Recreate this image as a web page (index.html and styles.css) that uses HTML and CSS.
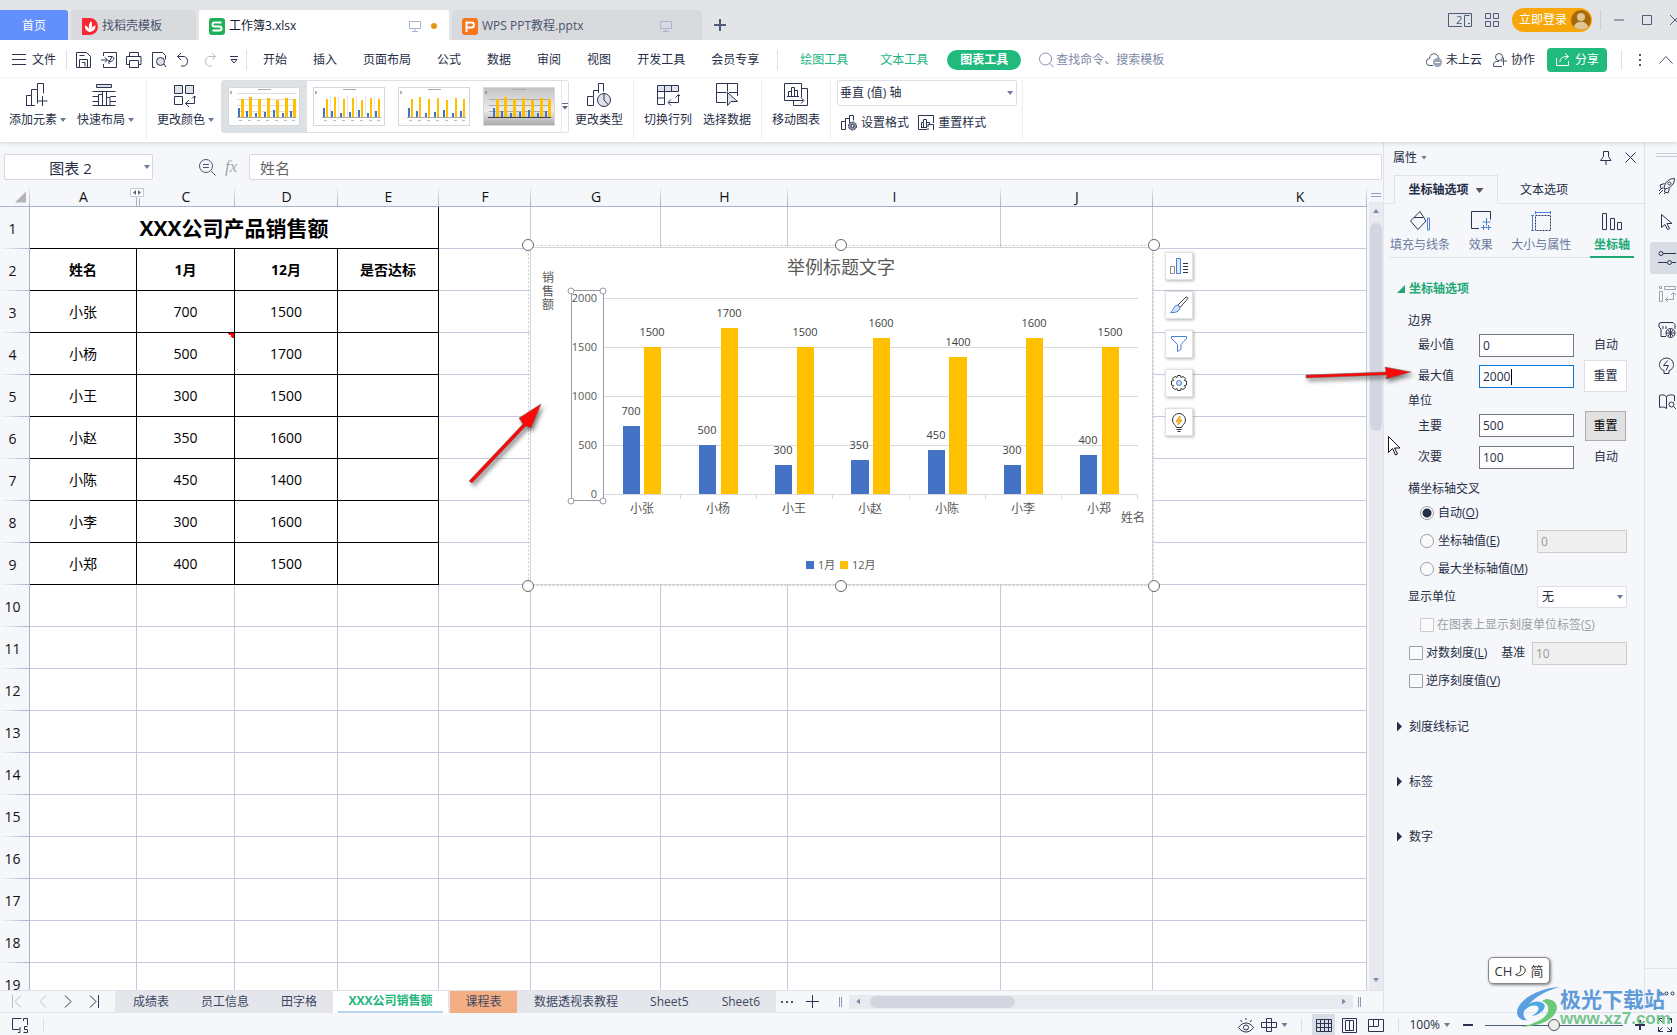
FILE: index.html
```html
<!DOCTYPE html>
<html lang="zh-CN">
<head>
<meta charset="utf-8">
<title>工作簿3.xlsx</title>
<link rel="stylesheet" href="styles.css">
</head>
<body>
<svg class="defs" width="0" height="0" aria-hidden="true">
  <defs>
    <symbol id="bars" viewBox="0 0 70 37">
      <path d="M29 1.500h13" stroke="#aaa"/>
      <path d="M2 3v3" stroke="#666"/>
      <path d="M9 20h2v9h-2zM17 23h2v6h-2zM26 25h2v4h-2zM35 24h2v5h-2zM44 22h2v7h-2zM53 25h2v4h-2zM61 23h2v6h-2z" fill="#4472c4"/>
      <path d="M12 11h2v18h-2zM20 9h2v20h-2zM29 11h2v18h-2zM38 10h2v19h-2zM47 12h2v17h-2zM56 10h2v19h-2zM64 11h2v18h-2z" fill="#ffc000"/>
      <path d="M8 29.500h59" stroke="#aaa"/>
      <path d="M10 32.500h3M19 32.500h3M28 32.500h3M37 32.500h3M46 32.500h3M55 32.500h3M63 32.500h3" stroke="#bbb"/>
    </symbol>
    <symbol id="monitor" viewBox="0 0 12 12"><path d="M.5 1.500h11v7H.5zM6 8.500v3M3 11.500h6" fill="none" stroke="#a9b4d2"/></symbol>
  </defs>
</svg>

<header class="titlebar">
  <nav class="doctabs">
    <button class="doctab home">首页</button>
    <button class="doctab docer"><svg width="16" height="17" viewBox="0 0 16 17"><path d="M0 0h8a8 8.500 0 0 1 0 17H0z" fill="#fb2635"/><path d="M7.500 14C4 13 2.500 10.500 3 7.500 5 8 6.500 9.500 7 11 6.500 8 7 5.500 9 3c1.500 3 1.500 5 0 8 1-2 2.500-3 4.500-3.500 0 3.500-2 6-6 6.500z" fill="#fff"/></svg>找稻壳模板</button>
    <button class="doctab active"><svg width="16" height="17" viewBox="0 0 16 17"><rect width="16" height="17" rx="3" fill="#1faf58"/><path d="M12.500 4.500h-7a2 2 0 0 0 0 4h5a2 2 0 0 1 0 4h-7" fill="none" stroke="#fff" stroke-width="2"/></svg><span class="name">工作簿3.xlsx</span><svg width="12" height="12"><use href="#monitor"/></svg><i class="dirty"></i></button>
    <button class="doctab ppt"><svg width="16" height="17" viewBox="0 0 16 17"><rect width="16" height="17" rx="3" fill="#f6761b"/><path d="M4.500 14V4.500h5a2.500 2.500 0 0 1 0 5H5" fill="none" stroke="#fff" stroke-width="2"/></svg><span class="name">WPS PPT教程.pptx</span><svg width="12" height="12"><use href="#monitor"/></svg></button>
    <button class="newtab" aria-label="新建"><svg width="12" height="12"><path d="M6 0v12M0 6h12" stroke="#4d5b7c" stroke-width="2"/></svg></button>
  </nav>
  <div class="wintools">
    <svg width="24" height="15" fill="none" stroke="#4d5b7c"><path d="M14 13.500H.5v-13h23v13H16.500v-11h5M20 10.500h2"/><text x="8" y="11" class="two">2</text></svg>
    <svg width="14" height="15" fill="none" stroke="#4d5b7c"><path d="M.5.5h5v5h-5zM8.500.5h5v5h-5zM.5 8.500h5v5h-5zM8.500 8.500h5v5h-5z"/></svg>
    <button class="login">立即登录<svg width="20" height="20" viewBox="0 0 20 20"><circle cx="10" cy="10" r="10" fill="#a5690c"/><circle cx="10" cy="7" r="4" fill="#e0c594"/><path d="M3 17c1-7 13-7 14 0a10 10 0 0 1-14 0z" fill="#e0c594"/></svg></button>
    <i class="vline"></i>
    <svg width="10" height="12"><path d="M0 6h10" stroke="#4d5b7c"/></svg>
    <svg width="10" height="12" fill="none" stroke="#4d5b7c"><path d="M.5 1.500h9v9h-9z"/></svg>
    <svg width="10" height="12" stroke="#4d5b7c"><path d="M0 1l10 10M10 1L0 11"/></svg>
  </div>
</header>

<div class="menubar">
  <button class="file"><svg width="14" height="11"><path d="M0 .5h14M0 5.500h14M0 10.500h14" stroke="#2b3350"/></svg>文件</button>
  <i class="vline"></i>
  <div class="quick">
    <svg width="16" height="16"><path d="M.5.5h10l4 4v11H.5zM3.500 15V7.500h8V15M3.500 3.500h5M6 10.500h3v4"/></svg>
    <svg width="16" height="16"><path d="M2.500 4V.5h13v15h-13V12M0 8h6M4 5.500L6.500 8 4 10.500M7 4.500h4c4 1 1 6-3 5M8 12V8M11 5l-3 5"/></svg>
    <svg width="16" height="16"><path d="M3.500 4V.5h9V4M3 12.500H.5v-8h14.500v8h-2M3.500 8.500h9v7h-9z"/></svg>
    <svg width="16" height="16"><path d="M4 15.500H1.500V.5h10l3 3v4M13 12l2 3"/><circle cx="9.500" cy="9.500" r="4" fill="#dde0e6"/></svg>
    <svg width="16" height="16"><path d="M5 1L1.500 4.500 5 8M1.500 4.500h7a4.500 5 0 0 1 0 9.500H5"/></svg>
    <svg width="16" height="16" class="off"><path d="M11 1l3.500 3.500L11 8M14.500 4.500h-7a4.500 5 0 0 0 0 9.500H11"/></svg>
    <svg class="fold" width="8" height="8" viewBox="0 0 8 8"><path d="M0 .5h8M1 3.500h6L4 7z"/></svg>
  </div>
  <i class="vline"></i>
  <nav class="menus">
    <a href="#">开始</a><a href="#">插入</a><a href="#">页面布局</a><a href="#">公式</a><a href="#">数据</a><a href="#">审阅</a><a href="#">视图</a><a href="#">开发工具</a><a href="#">会员专享</a>
  </nav>
  <i class="vline"></i>
  <nav class="ctxmenus"><a href="#">绘图工具</a><a href="#">文本工具</a><a href="#" class="on">图表工具</a></nav>
  <label class="search"><svg width="15" height="16" fill="none" stroke="#8590ab"><circle cx="6.500" cy="7" r="6"/><path d="M11 11.500l3.500 3.500"/></svg><input type="text" placeholder="查找命令、搜索模板"></label>
  <div class="menuright">
    <button class="cloud"><svg width="16" height="14" fill="none" stroke="#4d5670"><path d="M7 12.500H4a3.500 3.500 0 0 1-.5-7 4.500 4.500 0 0 1 9-.5 3 3 0 0 1 1.500 2"/><circle cx="11.500" cy="9.500" r="4.500" fill="#9aa3b8" stroke="none"/><path d="M9 9.500h5" stroke="#fff"/></svg>未上云</button>
    <button class="coop"><svg width="14" height="14" fill="none" stroke="#4d5670"><circle cx="6" cy="4" r="3.500"/><path d="M9 13.500H.5V11a3 3 0 0 1 3-2.500H6M10.500 4.500v8M8 8h6"/></svg>协作</button>
    <button class="share"><svg width="14" height="13" fill="none" stroke="#fff"><path d="M.5 5v7.500h12V8M4 9c0-4 3-5.500 8-5.500M9 .5l3.500 3L9 6.500"/></svg>分享</button>
    <i class="vline"></i>
    <svg width="3" height="12" fill="#4d5670"><path d="M0 0h2v2H0zM0 5h2v2H0zM0 10h2v2H0z"/></svg>
    <svg width="14" height="8" fill="none" stroke="#4d5670"><path d="M.5 7.500L7 .5l6.500 7"/></svg>
  </div>
</div>

<section class="ribbon">
  <button class="big"><svg width="24" height="24"><path d="M2.500 22.500v-10h5v10M2 22.500h9M7.500 12.500v-6h6v14M13.500 6V.5h6v10M18.500 13v10M13.500 18h10"/></svg><span>添加元素<i class="caret"></i></span></button>
  <button class="big"><svg width="24" height="24"><path d="M4.500 1.500h15v3h-15z" fill="#dfe2e8"/><path d="M.5 8.500h23M.5 13.500h6M.5 18.500h6M.5 22.500h23M18 13.500h6M18 18.500h6M6.500 22V11.500h4V22M10.500 14V8.500h4V22M14.500 14.500h3.500V22"/></svg><span>快速布局<i class="caret"></i></span></button>
  <i class="sep"></i>
  <button class="big"><svg width="24" height="24"><path d="M2.500 2.500h8v8h-8zM13.500 2.500h8v8h-8z" fill="#dfe2e8"/><path d="M2.500 13.500h8v8h-8zM22.500 13v7.500h-9M17 17l-3.500 3.500L17 24M20 15.500l2.500-2.500 2.500 2.500"/></svg><span>更改颜色<i class="caret"></i></span></button>
  <div class="gallery">
    <button class="sel" aria-label="样式 1"><svg width="72" height="39" viewBox="0 0 70 37"><path d="M8 5.500h60M8 11.500h60M8 17.500h60M8 23.500h60" stroke="#ddd"/><use href="#bars" width="70" height="37"/><path d="M12 11h3v18h-3zM20 9h3v20h-3zM29 11h3v18h-3zM38 10h3v19h-3zM47 12h3v17h-3zM56 10h3v19h-3zM64 11h3v18h-3z" fill="#ffc000"/></svg></button>
    <button aria-label="样式 2"><svg width="72" height="39" viewBox="0 0 70 37"><path d="M16.500 8v21M24.500 8v21M33.500 8v21M42.500 8v21M51.500 8v21M60.500 8v21" stroke="#e4e4e4"/><use href="#bars" width="70" height="37"/></svg></button>
    <button aria-label="样式 3"><svg width="72" height="39" viewBox="0 0 70 37"><use href="#bars" width="70" height="37"/></svg></button>
    <button class="gray" aria-label="样式 4"><svg width="72" height="39" viewBox="0 0 70 37"><path d="M5 11.500h60M5 17.500h60M5 23.500h60" stroke="#aaa"/><use href="#bars" width="70" height="37"/><path d="M12 11h3v18h-3zM20 9h3v20h-3zM29 11h3v18h-3zM38 10h3v19h-3zM47 12h3v17h-3zM56 10h3v19h-3zM64 11h3v18h-3z" fill="#ffc000"/><path d="M4 29.500h63" stroke="#444"/></svg></button>
    <button class="more" aria-label="更多样式"><svg width="6" height="7" viewBox="0 0 6 7"><path d="M0 .5h6" stroke="#5b6784"/><path d="M0 3h6L3 6.500z" fill="#5b6784" stroke="none"/></svg></button>
  </div>
  <button class="big"><svg width="24" height="24"><path d="M.5 22.500v-9h6v9zM6.500 13V7.500h5M11.500 10V.5h5v8"/><circle cx="17" cy="17" r="6.500" fill="#dfe2e8"/><path d="M17 10.500V17l4.500 5"/></svg><span>更改类型</span></button>
  <i class="sep"></i>
  <button class="big"><svg width="24" height="24"><path d="M1.500 2.500h21v6h-21z" fill="#dfe2e8"/><path d="M1.500 2.500v19h7v-19M15.500 2.500v6M1.500 15h7M22.500 12v7.500h-10M15 16.500l-3 3 3 3M19.500 14.500l3-3 3 3"/></svg><span>切换行列</span></button>
  <button class="big"><svg width="24" height="24"><path d="M11 19.500H1.500v-19h21V13M1.500 9.500h10M12.500.5v8M22 9.500h-8"/><path d="M12.500 9.500v13l3.500-4h6.500z" fill="#dfe2e8"/></svg><span>选择数据</span></button>
  <i class="sep"></i>
  <button class="big"><svg width="24" height="24"><path d="M11 17.500H.5V.5h17v14M17.500 5.500h6v17h-14v-5M11 17.500h8M17 14.500l3 3-3 3M4.500 13V8.500h3V13M7.500 9V4.500h3V13M10.500 7.500h3V13M3 13.500h12"/></svg><span>移动图表</span></button>
  <i class="sep"></i>
  <div class="axis">
    <span class="pick"><select aria-label="图表元素"><option>垂直 (值) 轴</option></select></span>
    <div class="pair">
      <button class="small"><svg width="16" height="16"><path d="M.5 14.500V6.500h4v8zM4.500 6V3.500h4M8.500 8V.5h4v5"/><circle cx="11.500" cy="11" r="4" fill="#8d95a8" stroke-dasharray="2 1"/><circle cx="11.500" cy="11" r="1.500" fill="#fff"/></svg>设置格式</button>
      <button class="small"><svg width="16" height="16"><path d="M9 14.500H.5V.5h15V8M3.500 12V7.500h2V12M5.500 7V4.500h3V12M8.500 7.500h3V9M3 12.500h6M10 12V9.500h5.500v5.500M10 15v-2"/></svg>重置样式</button>
    </div>
  </div>
  <i class="sep"></i>
</section>

<main class="workspace">
  <section class="main">
    <div class="formula">
      <span class="namebox"><input type="text" value="图表 2" aria-label="名称框"><i class="caret"></i></span>
      <svg width="17" height="17" fill="none" stroke="#4d5670"><circle cx="7" cy="7" r="6.500"/><path d="M12 12l4.500 4.500M4 5.500h6M4 8.500h6"/></svg>
      <span class="fx">fx</span>
      <input class="fbar" type="text" value="姓名" aria-label="编辑栏">
    </div>
    <div class="sheet">
      <div class="gridwrap">
        <table class="grid">
          <colgroup><col class="cn"><col class="ca"><col class="cc"><col class="cd"><col class="ce"><col class="cf"><col class="cg"><col class="ch"><col class="ci"><col class="cj"><col></colgroup>
          <thead><tr><th class="corner"><i></i></th><th>A</th><th>C</th><th>D</th><th>E</th><th>F</th><th>G</th><th>H</th><th>I</th><th>J</th><th class="last">K</th></tr></thead>
          <tbody>
            <tr><th>1</th><td colspan="4" class="d title">XXX公司产品销售额</td><td><td><td><td><td><td></tr>
            <tr class="hd"><th>2</th><td class="d">姓名<td class="d">1月<td class="d">12月<td class="d">是否达标<td><td><td><td><td><td></tr>
            <tr><th>3</th><td class="d">小张<td class="d">700<td class="d">1500<td class="d"><td><td><td><td><td><td></tr>
            <tr><th>4</th><td class="d">小杨<td class="d note">500<td class="d">1700<td class="d"><td><td><td><td><td><td></tr>
            <tr><th>5</th><td class="d">小王<td class="d">300<td class="d">1500<td class="d"><td><td><td><td><td><td></tr>
            <tr><th>6</th><td class="d">小赵<td class="d">350<td class="d">1600<td class="d"><td><td><td><td><td><td></tr>
            <tr><th>7</th><td class="d">小陈<td class="d">450<td class="d">1400<td class="d"><td><td><td><td><td><td></tr>
            <tr><th>8</th><td class="d">小李<td class="d">300<td class="d">1600<td class="d"><td><td><td><td><td><td></tr>
            <tr><th>9</th><td class="d">小郑<td class="d">400<td class="d">1500<td class="d"><td><td><td><td><td><td></tr>
            <tr><th>10</th><td><td><td><td><td><td><td><td><td><td></tr>
            <tr><th>11</th><td><td><td><td><td><td><td><td><td><td></tr>
            <tr><th>12</th><td><td><td><td><td><td><td><td><td><td></tr>
            <tr><th>13</th><td><td><td><td><td><td><td><td><td><td></tr>
            <tr><th>14</th><td><td><td><td><td><td><td><td><td><td></tr>
            <tr><th>15</th><td><td><td><td><td><td><td><td><td><td></tr>
            <tr><th>16</th><td><td><td><td><td><td><td><td><td><td></tr>
            <tr><th>17</th><td><td><td><td><td><td><td><td><td><td></tr>
            <tr><th>18</th><td><td><td><td><td><td><td><td><td><td></tr>
            <tr><th>19</th><td><td><td><td><td><td><td><td><td><td></tr>
          </tbody>
        </table>
        <svg class="hiddencol" width="15" height="21"><path d="M.5.5h13v8H.5z" fill="#fff" stroke="#c3c8d6"/><path d="M6 2L3 4.500 6 7zM8 2l3 2.500L8 7z" fill="#5b6784"/><path d="M6.500 10v11M9.500 10v11" stroke="#a9b2cc"/></svg>

        <svg class="chart" width="644" height="360" viewBox="520 236 644 360">
          <rect x="530.500" y="247.500" width="622" height="337" fill="#fff" stroke="#d5d5d5"/>
          <rect x="528.500" y="245.500" width="625" height="340" fill="none" stroke="#c8c8c8" stroke-dasharray="2 2"/>
          <path d="M604 298.500h534M604 347.500h534M604 396.500h534M604 445.500h534M604 494.500h534M680.500 494v5M756.500 494v5M832.500 494v5M909.500 494v5M985.500 494v5M1061.500 494v5M1137.500 494v5" stroke="#d9d9d9"/>
          <path d="M623 426h17v68h-17zM699 445h17v49h-17zM775 465h17v29h-17zM851 460h18v34h-18zM928 450h17v44h-17zM1004 465h17v29h-17zM1080 455h17v39h-17z" fill="#4472c4"/>
          <path d="M644 347h17v147h-17zM721 328h17v166h-17zM797 347h17v147h-17zM873 338h17v156h-17zM949 357h18v137h-18zM1026 338h17v156h-17zM1102 347h17v147h-17z" fill="#ffc000"/>
          <text x="841" y="274" class="ctitle">举例标题文字</text>
          <g class="cside"><text x="548" y="282">销</text><text x="548" y="296">售</text><text x="548" y="309">额</text></g>
          <g class="cval axisval"><text x="597" y="302">2000</text><text x="597" y="351">1500</text><text x="597" y="400">1000</text><text x="597" y="449">500</text><text x="597" y="498">0</text></g>
          <g class="cval"><text x="631" y="415">700</text><text x="707" y="434">500</text><text x="783" y="454">300</text><text x="859" y="449">350</text><text x="936" y="439">450</text><text x="1012" y="454">300</text><text x="1088" y="444">400</text>
          <text x="652" y="336">1500</text><text x="729" y="317">1700</text><text x="805" y="336">1500</text><text x="881" y="327">1600</text><text x="958" y="346">1400</text><text x="1034" y="327">1600</text><text x="1110" y="336">1500</text></g>
          <g class="ccat"><text x="642" y="513">小张</text><text x="718" y="513">小杨</text><text x="794" y="513">小王</text><text x="870" y="513">小赵</text><text x="947" y="513">小陈</text><text x="1023" y="513">小李</text><text x="1099" y="513">小郑</text><text x="1133" y="522">姓名</text></g>
          <path d="M806 561h8v8h-8z" fill="#4472c4"/><path d="M840 561h8v8h-8z" fill="#ffc000"/>
          <g class="cleg"><text x="818" y="569">1月</text><text x="852" y="569">12月</text></g>
          <g fill="#fff" stroke="#9a9aa2"><path d="M571.500 290.500h32v210h-32z" fill="none"/><circle cx="571" cy="291" r="3"/><circle cx="603" cy="291" r="3"/><circle cx="571" cy="501" r="3"/><circle cx="603" cy="501" r="3"/></g>
          <g fill="#fff" stroke="#666"><circle cx="528" cy="245" r="5.500"/><circle cx="841" cy="245" r="5.500"/><circle cx="1154" cy="245" r="5.500"/><circle cx="528" cy="586" r="5.500"/><circle cx="841" cy="586" r="5.500"/><circle cx="1154" cy="586" r="5.500"/></g>
        </svg>

        <div class="charttools">
          <button aria-label="图表元素"><svg width="20" height="18"><path d="M1.500 16.500v-7h4v7z" stroke="#8b8b8b"/><path d="M7.500 16.500V1.500h4v15z" fill="#dce9fb" stroke="#4a7fd6"/><path d="M14 6.500h5M14 9.500h5M14 12.500h5M14 15.500h5" stroke="#333"/></svg></button>
          <button aria-label="图表样式"><svg width="20" height="18"><path d="M9 9l8-8c2 0 2 1 1.500 2L11 11.500z" stroke="#444"/><path d="M8.500 9C4 10 5 14 1.500 16.500c5 .5 9-1 9.500-5z" fill="#cfe0f8" stroke="#4a7fd6"/></svg></button>
          <button aria-label="图表筛选器"><svg width="20" height="18"><path d="M2.500 1.500h15v2L12 9.500v5l-3.500 2v-7L2.500 3.500z" stroke="#4a7fd6"/></svg></button>
          <button aria-label="设置"><svg width="20" height="18"><path d="M8.500 1.500h3l.5 2 2-1 2.500 2-1 2 2 .5v4l-2 .5 1 2-2.500 2-2-1-.5 2h-3l-.5-2-2 1-2.500-2 1-2-2-.5V7l2-.5-1-2 2.500-2 2 1z" stroke="#333"/><circle cx="10" cy="9" r="2.500" fill="#cfe0f8" stroke="#4a7fd6"/></svg></button>
          <button aria-label="智能推荐"><svg width="20" height="19"><path d="M7.500 14.500C7 12 3.500 11 3.500 7a6.500 6.500 0 0 1 13 0c0 4-3.500 5-4 7.500zM7.500 16.500h5M8.500 18.500h3" stroke="#333"/><path d="M11 3L7 8.500h2.500L9 12l4-5h-2.500z" fill="#ffc629" stroke="#e99a12"/></svg></button>
        </div>

        <svg class="arrow one" width="90" height="94" viewBox="460 396 90 94"><path d="M469 481L523 424 519 418 541 404 531 428 526 426 472 483z" fill="#fb0808" stroke="#666" stroke-width=".5"/></svg>
      </div>
      <div class="vscroll"><i class="grip"></i><i class="up"></i><i class="vthumb"></i><i class="down"></i></div>
    </div>
    <div class="sheettabs">
      <div class="sheetnav">
        <svg width="10" height="13" class="off"><path d="M.5 0v13M9 .5l-6 6 6 6"/></svg>
        <svg width="8" height="13" class="off"><path d="M7 .5l-6 6 6 6"/></svg>
        <svg width="8" height="13"><path d="M1 .5l6 6-6 6"/></svg>
        <svg width="10" height="13"><path d="M9.500 0v13M1 .5l6 6-6 6"/></svg>
      </div>
      <nav class="tabs"><button>成绩表</button><button>员工信息</button><button>田字格</button><button class="cur">XXX公司销售额</button><button class="orange">课程表</button><button>数据透视表教程</button><button>Sheet5</button><button>Sheet6</button></nav>
      <svg class="dots" width="12" height="2"><path d="M0 0h2v2H0zM5 0h2v2H5zM10 0h2v2h-2z" fill="#4d5670"/></svg>
      <svg width="14" height="14"><path d="M6.500 0v13M0 6.500h13" stroke="#2b3350"/></svg>
      <i class="pipes first"></i>
      <div class="hscroll"><i class="left"></i><i class="hthumb"></i><i class="right"></i></div>
      <i class="pipes"></i>
    </div>
  </section>

  <aside class="panel">
    <div class="phead"><span>属性<i class="caret"></i></span>
      <svg width="14" height="14"><path d="M4.500.5h5v5l2.500 4H1.500l3-4zM7 9.500V14"/></svg>
      <svg width="11" height="11"><path d="M.5.5l10 10M10.500.5l-10 10"/></svg></div>
    <div class="ptabs"><button class="on">坐标轴选项<i class="caret dark"></i></button><button>文本选项</button></div>
    <div class="pkinds">
      <button><svg width="20" height="20"><path d="M10 .5L.5 10 8 18.500l8-8.500zM4 6.500h9"/><path d="M17.500 7v12M19.500 7v12M17.500 19h2M17.500 7h2" class="bl"/></svg>填充与线条</button>
      <button><svg width="20" height="20"><path d="M8 17.500H.5v-17h19v8"/><path d="M15.500 7v8M11.500 11h8M12.500 14v5M10 16.500h5M17.500 14v5M15 16.500h5" class="bl"/></svg>效果</button>
      <button><svg width="20" height="20"><path d="M4.500 4.500h15v15h-15z" stroke-dasharray="2 1"/><path d="M4 1.500h16M4.500 0v3M19.500 0v3M1.500 4v16M0 4.500h3M0 19.500h3" class="bl"/></svg>大小与属性</button>
      <button class="on"><svg width="20" height="18"><path d="M.5.5h4v16h-4zM8.500 5.500h4v11h-4zM15.500 9.500h4v7h-4z"/></svg>坐标轴</button>
    </div>
    <form class="opts">
      <h3 class="sect open"><i></i>坐标轴选项</h3>
      <div class="row">边界</div>
      <div class="row in"><label for="min">最小值</label><input id="min" class="num" value="0"><button type="button" class="plain">自动</button></div>
      <div class="row in tall"><label for="max">最大值</label><span class="focused"><input id="max" class="num" value="2000"><i class="beam"></i></span><button type="button" class="reset">重置</button></div>
      <div class="row low">单位</div>
      <div class="row in major"><label for="maj">主要</label><input id="maj" class="num" value="500"><button type="button" class="reset pressed">重置</button></div>
      <div class="row in minor"><label for="minr">次要</label><input id="minr" class="num" value="100"><button type="button" class="plain">自动</button></div>
      <div class="row cross">横坐标轴交叉</div>
      <div class="row opt ind"><label><input type="radio" name="cross" checked>自动(<u>O</u>)</label></div>
      <div class="row opt ind"><label><input type="radio" name="cross">坐标轴值(<u>E</u>)</label><input class="num dis" value="0" disabled aria-label="坐标轴值"></div>
      <div class="row opt ind"><label><input type="radio" name="cross">最大坐标轴值(<u>M</u>)</label></div>
      <div class="row opt"><label for="unit">显示单位</label><span class="pick unit"><select id="unit"><option>无</option></select></span></div>
      <div class="row opt ind"><label class="gray"><input type="checkbox" disabled>在图表上显示刻度单位标签(<u>S</u>)</label></div>
      <div class="row opt tick"><label><input type="checkbox">对数刻度(<u>L</u>)</label><label for="base" class="base">基准</label><input id="base" class="num dis wide" value="10" disabled></div>
      <div class="row opt tick"><label><input type="checkbox">逆序刻度值(<u>V</u>)</label></div>
      <div class="folds">
        <h3 class="sect"><i></i>刻度线标记</h3><h3 class="sect"><i></i>标签</h3><h3 class="sect"><i></i>数字</h3>
      </div>
    </form>
  </aside>

  <nav class="strip">
    <i class="bars2"></i>
    <button aria-label="推荐"><svg width="18" height="18"><path d="M6 11C7 5 11 1.500 16.500 1.500 16.500 7 13 11 7 12zM6.500 6.500L2 8l1 3.500 2.500-.5M11.500 11.500L10 16l-3.500-1 .5-3M5 13l-4 4M8 15l-2 2M3 12l-2 2"/><circle cx="11.500" cy="6.500" r="1.500"/></svg></button>
    <button aria-label="选择"><svg width="18" height="18"><path d="M3.500 1.500v13l3.500-3 2.500 5 2-1-2.500-5h5z"/></svg></button>
    <button class="on" aria-label="属性"><svg width="18" height="18"><path d="M5 4.500h13M0 13.500h9M14 13.500h4"/><circle cx="3" cy="4.500" r="2"/><circle cx="11.500" cy="13.500" r="2"/></svg></button>
    <button class="off" aria-label="切换"><svg width="18" height="18"><path d="M1.500 1.500h2v2h-2zM6.500 1.500h11v3h-11zM1.500 6.500h3v10h-3zM15.500 8v6.500h-8M10 12l-2.500 2.500L10 17M13 10l2.500-2.500L18 10"/></svg></button>
    <button aria-label="翻译"><svg width="18" height="18"><path d="M3 8v7.500h5M3 8L1 6V2.500l2-1h12l2 2V8M5 5v3M8 5v3"/><circle cx="12.500" cy="12" r="4.500"/><path d="M12.500 8v8M8 12h9M10 9l5 6M15 9l-5 6"/></svg></button>
    <button aria-label="智能"><svg width="18" height="18"><path d="M6 13.500C2.500 12.500 1.500 10 1.500 7.500a7 6.500 0 0 1 14 0c0 2.500-1 5-4.500 6v3H6zM9.500 3.500L5.500 8.500h5l-2.500 5"/></svg></button>
    <button aria-label="查阅"><svg width="18" height="18"><path d="M8.500 3.500C6 1.500 4 1.500 1.500 2.500v12c3-1 5-.5 7 1M8.500 3.500v12M8.500 3.500c2.500-2 5-2 8-1V8"/><circle cx="13.500" cy="11.500" r="2.500"/><path d="M15.500 13.500L18 16"/></svg></button>
    <i class="rule"></i>
    <svg class="more3" width="17" height="5"><circle cx="2.500" cy="2.500" r="1.500"/><circle cx="8.500" cy="2.500" r="1.500"/><circle cx="14.500" cy="2.500" r="1.500"/></svg>
  </nav>
</main>

<footer class="status">
  <svg width="16" height="15"><path d="M7 11.500H.5V.500h9M11.500 3V.500h4V7M6 14.500h2V9M15.500 8.500h-3v3h3v3h-4"/></svg>
  <i class="vline"></i>
  <div class="sright">
    <svg width="16" height="15"><path d="M.5 9.500c4-6 11-6 15 0-4 6-11 6-15 0zM8 0v2M2.500 2L4 4M13.500 2L12 4"/><circle cx="8" cy="9.500" r="2.500"/></svg>
    <svg width="16" height="14"><path d="M5.500.5h5v4h5v5h-5v4h-5v-4h-5v-5h5zM5.500 4.500h5v5h-5z"/></svg><i class="caret"></i>
    <i class="vline"></i>
    <button class="view on" aria-label="普通视图"><svg width="16" height="13"><path d="M.5.5h15v12H.5zM.5 4.500h15M.5 8.500h15M4.500 0v13M8.500 0v13M12.500 0v13"/></svg></button>
    <button class="view" aria-label="页面布局"><svg width="15" height="15"><path d="M.5.5h14v14H.5zM3.500 2.500h8v10h-8zM7.500 2v11"/></svg></button>
    <button class="view" aria-label="分页预览"><svg width="16" height="13"><path d="M.5.5h15v12H.5zM5.500 0v7M10.500 0v7M.5 7.500h10"/></svg></button>
    <i class="vline near"></i>
    <button class="zoom">100%<i class="caret"></i></button>
    <svg width="10" height="2"><path d="M0 1h10" stroke-width="2"/></svg>
    <input type="range" min="0" max="100" value="50" aria-label="缩放">
    <svg width="10" height="10"><path d="M5 0v10M0 5h10" stroke-width="2"/></svg>
    <svg width="14" height="14"><path d="M9 .5h4.500V5M13.500.5l-4 4M5 13.500H.5V9M.5 13.500l4-4M.5 5V.5H5M.5.5l4 4M13.500 9v4.500H9M13.500 13.500l-4-4"/></svg>
  </div>
</footer>

<svg class="arrow two-a" width="116" height="24" viewBox="1300 362 116 24"><path d="M1306 375L1386 372 1385 367 1411 372 1386 379 1387 375 1306 378z" fill="#fb0808" stroke="#666" stroke-width=".5"/></svg>
<svg class="cursor" width="14" height="20"><path d="M.5.5v16l4-4 3 6.500 2-1-3-6h5.500z" fill="#fff" stroke="#111"/></svg>
<div class="ime">CH<svg width="12" height="12"><path d="M5 1c7 0 7 8 0 9.500-2 .5-3 0-4.500-1C5 9 7 5 5 1z" fill="none" stroke="#333"/></svg>简</div>
<div class="mark">
  <svg width="46" height="42" viewBox="0 0 46 42"><path d="M44 1C22 2 2 14 1 26c0 6 5 9 10 8-5-3-5-10 3-17C22 9 32 4 44 1z" fill="#5c9fe0"/><path d="M7 26c1-9 16-14 21-8 3 4-4 11-12 12 5-3 8-7 6-9-3-3-10-1-15 5z" fill="#4fa7e2"/><path d="M30 13c13 0 14 12 5 19-8 7-20 8-31 9C18 38 30 33 32 25c1-5-1-8-6-10z" fill="#6cc977"/></svg>
  <div><strong>极光下载站</strong><a href="#">www.xz7.com</a></div>
</div>
</body>
</html>
```
FILE: styles.css
```css
* { box-sizing: border-box; }
body {
  margin: 0;
  height: 100vh;
  display: flex;
  flex-direction: column;
  overflow: hidden;
  font: 12px/16px "Open Sans", "Noto Sans CJK SC", sans-serif;
  color: #262e46;
  background: #f5f7fa;
}
button, input, select { font: inherit; color: inherit; }
button { border: 0; padding: 0; background: none; white-space: nowrap; }
a { color: inherit; text-decoration: none; }
svg { display: block; flex: none; }
.defs { position: absolute; }
.vline { flex: none; width: 1px; height: 20px; background: #dcdfe6; }
.caret { flex: none; display: inline-block; width: 6px; height: 4px; background: #6b7898; clip-path: polygon(0 0, 100% 0, 50% 100%); }

/* title bar */
.titlebar { flex: none; height: 40px; display: flex; justify-content: space-between; background: #e3e4e7; }
.doctabs { display: flex; align-items: flex-end; gap: 3px; }
.doctab { height: 30px; display: flex; align-items: center; gap: 4px; padding-top: 2px; background: #d9dadd; border-radius: 3px 3px 0 0; color: #4a546e; text-align: left; }
.home { width: 68px; justify-content: center; background: #628ffb; color: #fff; border-radius: 0 3px 0 0; }
.docer { width: 125px; padding-left: 11px; }
.doctab.active { width: 250px; padding: 2px 12px 0 10px; background: #fff; color: #111a30; }
.ppt { width: 250px; padding: 2px 30px 0 10px; }
.doctab .name { flex: 1; }
.dirty { width: 6px; height: 6px; margin-left: 6px; border-radius: 3px; background: #e6980c; }
.newtab { height: 30px; margin-left: 9px; }
.wintools { display: flex; align-items: center; height: 40px; gap: 13px; overflow: hidden; margin-right: -3px; }
.two { font-size: 11px; fill: #4d5b7c; stroke: none; }
.login { display: flex; align-items: center; gap: 4px; width: 80px; height: 24px; padding: 0 2px 0 7px; border-radius: 12px; background: #f7a70a; color: #fff; }
.wintools .vline { margin-left: -5px; background: #cdd0d6; }
.wintools svg:nth-of-type(n+4) { margin-left: 5px; }

/* menu bar */
.menubar { flex: none; height: 39px; display: flex; align-items: center; background: #fff; white-space: nowrap; }
.file { display: flex; align-items: center; gap: 6px; margin: 0 10px 0 12px; }
.quick { display: flex; align-items: center; gap: 9px; margin: 0 8px 0 9px; fill: none; stroke: #2b3350; }
.quick .fold { margin-left: 4px; }
.off { stroke: #b9bcc4; }
.menus { display: flex; gap: 26px; margin: 0 18px 0 16px; }
.ctxmenus { display: flex; align-items: center; gap: 32px; margin-left: 22px; color: #20b67b; }
.ctxmenus .on { margin-left: -13px; padding: 2px 13px; border-radius: 10px; background: #20b97e; color: #fff; font-weight: bold; }
.search { display: flex; align-items: center; gap: 2px; margin-left: 18px; }
.search input { width: 120px; border: 0; padding: 0; }
.search input::placeholder { color: #7d89a6; }
.menuright { margin-left: auto; display: flex; align-items: center; padding-right: 4px; }
.menuright button { display: flex; align-items: center; gap: 4px; }
.menuright .coop { margin: 0 12px 0 11px; }
.menuright .share { width: 60px; height: 24px; gap: 5px; padding-left: 9px; border-radius: 4px; background: #20b97e; color: #fff; }
.menuright .vline { margin: 0 17px 0 14px; }
.menuright > svg:last-child { margin-left: 17px; }

/* ribbon */
.ribbon { flex: none; height: 63px; display: flex; align-items: flex-start; background: #fff; box-shadow: 0 1px 4px rgba(40, 50, 80, .18); position: relative; }
.ribbon svg { fill: none; stroke: #2b3350; }
.big { display: flex; flex-direction: column; align-items: center; gap: 5px; padding-top: 4px; margin-left: 9px; }
.big span { display: flex; align-items: center; gap: 3px; }
.big + .big { margin-left: 11px; }
.big:has(.caret) svg { margin-right: 3px; }
.sep { flex: none; width: 1px; height: 61px; margin: 0 1px 0 12px; background: #eceef2; }
.sep:nth-of-type(n+2) { margin: 0 1px 0 10px; }
.gallery { display: flex; width: 348px; height: 53px; margin: 1px 0 0 7px; border: 1px solid #dcdfe6; border-radius: 3px; }
.gallery + .big { margin-left: 6px; }
.gallery button { width: 85px; display: flex; align-items: center; justify-content: center; }
.gallery button:not(.more) svg { border: 1px solid #d8d8d8; background: #fff; }
.gallery svg { stroke: none; }
.gallery .sel { background: #dce1e6; }
.gallery button.gray:not(.more) svg { background: linear-gradient(to bottom, #c4c4c4, #ececec 60%, #aaa); }
.gallery .more { width: auto; flex: 1; border-left: 1px solid #e6e8ed; }
.axis { margin: 1px 0 0 5px; display: flex; flex-direction: column; gap: 9px; width: 180px; }
.pick { position: relative; display: block; }
.pick select { appearance: none; width: 100%; height: 26px; padding: 0 2px; border: 1px solid #dcdfe6; border-radius: 2px; background: #fff; }
.pick::after { content: ""; position: absolute; right: 4px; top: 11px; width: 6px; height: 4px; background: #6b7898; clip-path: polygon(0 0, 100% 0, 50% 100%); }
.pair { display: flex; gap: 9px; padding-left: 4px; }
.small { display: flex; align-items: center; gap: 4px; }
.axis + .sep { margin-left: 5px; }

/* workspace */
.workspace { flex: 1; min-height: 0; display: flex; border-bottom: 1px solid #e0e2e9; }
.main { flex: 1; min-width: 0; display: flex; flex-direction: column; }
.formula { flex: none; height: 43px; display: flex; align-items: center; padding: 8px 1px 1px 4px; font-size: 15px; }
.formula input { height: 26px; border: 1px solid #d5d8de; border-radius: 2px; background: #fff; }
.namebox { position: relative; width: 149px; margin-right: 46px; }
.namebox input { width: 100%; padding-right: 18px; text-align: center; display: block; }
.namebox .caret { position: absolute; right: 3px; top: 11px; }
.fx { margin: 0 9px; width: 15px; color: #a2a5ad; font: italic 17px/20px "Liberation Serif", serif; }
.formula .fbar { flex: 1; padding: 0 10px; color: #666; }
.sheet { flex: 1; min-height: 0; display: flex; overflow: hidden; }
.gridwrap { flex: 1; min-width: 0; position: relative; overflow: hidden; }
.grid { width: 100%; table-layout: fixed; border-collapse: separate; border-spacing: 0; font-size: 14px; line-height: 18px; color: #000; }
.cn { width: 30px; } .ca { width: 107px; } .cc { width: 98px; } .cd { width: 103px; } .ce { width: 101px; }
.cf { width: 92px; } .cg { width: 130px; } .ch { width: 127px; } .ci { width: 213px; } .cj { width: 152px; }
.grid th { font-weight: normal; padding: 0; color: #111; }
.grid thead th { height: 22px; padding-top: 3px; border-bottom: 1px solid #a9b2cc; background: linear-gradient(to bottom, #f5f7fa, #a9b2cc) right / 1px 100% no-repeat #f5f7fa; }
.grid thead .last { padding-left: 80px; }
.grid tbody th { padding: 1px 4px 0 0; border-right: 1px solid #a9b2cc; background: linear-gradient(to right, #f5f7fa, #a9b2cc) bottom / 100% 1px no-repeat #f5f7fa; }
.grid .corner i { display: block; width: 11px; height: 11px; margin-left: 15px; background: #b4b4b4; clip-path: polygon(100% 0, 100% 100%, 0 100%); }
.grid td { height: 42px; padding: 0; text-align: center; background: #fff; border-right: 1px solid #c5cade; border-bottom: 1px solid #c5cade; }
.grid td.d { border-color: #000; }
.grid .title { font-size: 21px; font-weight: bold; }
.hd td { font-weight: bold; }
.grid .note { background: linear-gradient(45deg, transparent 50%, #f00 50%) top right / 6px 6px no-repeat #fff; }
.hiddencol { position: absolute; left: 130px; top: 3px; height: 18px; }
.chart { position: absolute; left: 520px; top: 51px; }
.chart text { text-anchor: middle; font-size: 12px; fill: #595959; }
.chart .ctitle { font-size: 18px; }
.chart .cval text { font-size: 11px; fill: #404040; }
.chart .axisval text { text-anchor: end; fill: #595959; }
.chart .cleg text { text-anchor: start; font-size: 11px; }
.charttools { position: absolute; left: 1165px; top: 67px; display: flex; flex-direction: column; gap: 11px; }
.charttools button { width: 28px; height: 28px; padding-left: 3px; background: #fff; border: 1px solid #e2e2e6; box-shadow: 1px 1px 3px rgba(0, 0, 0, .3); }
.charttools svg { fill: none; }
.arrow { position: absolute; filter: drop-shadow(2px 3px 2px rgba(0, 0, 0, .5)); }
.one { left: 460px; top: 211px; }
.vscroll { width: 16px; flex: none; display: flex; flex-direction: column; align-items: center; background: linear-gradient(#f5f7fa, #f5f7fa) top / 100% 17px no-repeat, #e9eaef; border-left: 2px solid #f5f7fa; }
.grip { width: 10px; height: 4px; margin: 8px 0 12px; border: solid #8f9bb6; border-width: 1px 0; }
.up, .down, .left, .right { flex: none; background: #7f8cab; }
.up { width: 6px; height: 4px; clip-path: polygon(50% 0, 100% 100%, 0 100%); }
.down { width: 6px; height: 4px; margin: auto 0 8px; clip-path: polygon(0 0, 100% 0, 50% 100%); }
.vthumb { width: 12px; height: 208px; margin-top: 10px; border-radius: 6px; background: #d3d6de; }

/* sheet tabs */
.sheettabs { flex: none; height: 22px; display: flex; align-items: center; padding-right: 22px; border-top: 1px solid #e0e2e9; }
.sheetnav { width: 115px; display: flex; gap: 17px; padding-left: 12px; fill: none; stroke: #2b3350; }
.sheetnav .off { stroke: #b9bcc4; }
.tabs { display: flex; height: 22px; padding-right: 16px; margin-right: 5px; background: #e4e6ec; color: #3e4862; }
.tabs button { padding: 1px 16px 0; }
.tabs button:first-child { padding-left: 18px; }
.tabs .cur { padding: 1px 0 0; margin: 0 7px 0 5px; width: 105px; background: #fff; box-shadow: -5px 0 #fff, 5px 0 #fff; border-bottom: 2px solid #b8d3f0; color: #20b67b; font-weight: bold; }
.tabs .orange { width: 67px; margin-right: 1px; padding: 1px 0 0; background: #f4ae84; }
.tabs button:last-child { padding-right: 0; }
.tabs button:nth-last-child(2) { padding-right: 17px; }
.sheettabs .dots { margin-right: 13px; }
.pipes { flex: none; width: 3px; height: 10px; border: solid #8f9bb6; border-width: 0 1px; margin-left: 5px; }
.pipes.first { margin: 0 7px 0 19px; }
.hscroll { flex: 1; height: 14px; display: flex; align-items: center; padding: 0 7px; background: #e9eaef; }
.left { width: 4px; height: 6px; clip-path: polygon(100% 0, 100% 100%, 0 50%); }
.right { width: 4px; height: 6px; margin-left: auto; clip-path: polygon(0 0, 100% 50%, 0 100%); }
.hthumb { width: 145px; height: 12px; margin-left: 10px; border-radius: 6px; background: #d3d6de; }

/* property panel */
.panel { flex: none; width: 262px; border-left: 1px solid #e0e2e9; border-right: 1px solid #e0e2e9; }
.panel svg { fill: none; stroke: #2b3350; }
.phead { height: 33px; display: flex; align-items: center; gap: 12px; padding: 0 8px 2px 9px; }
.phead span { flex: 1; }
.phead .caret { margin: 0 0 2px 4px; }
.ptabs { display: flex; height: 29px; padding-left: 10px; border-bottom: 1px solid #e0e2e9; }
.ptabs button { width: 92px; padding-top: 1px; }
.ptabs .on { width: 104px; height: 29px; border: 1px solid #e0e2e9; border-bottom-color: #f5f7fa; font-weight: bold; }
.ptabs .dark { width: 8px; height: 5px; margin: 0 0 1px 7px; background: #555; }
.pkinds { display: flex; justify-content: space-between; height: 54px; margin: 0 10px 0 6px; color: #6b7a9e; background: linear-gradient(#e0e2e9, #e0e2e9) bottom / 100% 1px no-repeat; }
.pkinds button { display: flex; flex-direction: column; align-items: center; justify-content: flex-end; gap: 6px; padding-bottom: 5px; }
.pkinds .bl { stroke: #4a7fd6; }
.pkinds .on { padding: 0 4px 3px; border-bottom: 2px solid #1fa974; color: #1fa974; font-weight: bold; }
.opts { padding: 19px 17px 0 13px; }
.sect { display: flex; align-items: center; height: 24px; margin: 0 0 8px; font-size: 12px; font-weight: normal; }
.sect i { width: 5px; height: 10px; margin-right: 7px; background: #262e46; clip-path: polygon(0 0, 100% 50%, 0 100%); }
.sect.open { color: #1fa974; font-weight: bold; }
.sect.open i { width: 8px; height: 8px; margin-right: 4px; background: #1fa974; clip-path: polygon(100% 0, 100% 100%, 0 100%); }
.row { display: flex; align-items: center; height: 24px; padding-left: 11px; white-space: nowrap; }
.row.in { padding-left: 21px; }
.row.in label { width: 61px; }
.row.tall { height: 32px; margin-top: 3px; }
.row.low { height: 17px; padding-top: 1px; }
.row.major { height: 33px; }
.row.minor { height: 30px; }
.row.cross { height: 27px; padding-top: 6px; }
.row.opt { height: 28px; }
.row.ind { padding-left: 23px; }
.row.tick { padding-left: 12px; }
.num { width: 95px; height: 23px; padding: 0 3px; border: 1px solid #747880; background: #fff; display: block; }
.focused { position: relative; }
.focused .num { border-color: #0f78d4; }
.beam { position: absolute; left: 32px; top: 4px; width: 1px; height: 16px; background: #000; }
.plain { margin-left: 20px; }
.reset { width: 43px; height: 32px; margin-left: 10px; border: 1px solid #dcdfe6; background: #fff; }
.reset.pressed { width: 41px; height: 30px; margin-left: 11px; border-color: #adadad; background: #e1e1e1; color: #000; }
.num.dis { width: 90px; margin-left: auto; border-color: #ccc; background: #efefef; color: #9a9a9a; }
.num.wide { width: 95px; }
.opt label { display: flex; align-items: center; }
.opt .base { margin-left: 14px; }
.opt input[type="radio"], .opt input[type="checkbox"] { appearance: none; width: 14px; height: 14px; margin: 0 4px 0 0; border: 1px solid #9a9ea8; border-radius: 7px; background: #f9fafc; }
.opt input[type="checkbox"] { border-radius: 1px; margin-right: 3px; }
.opt input[type="radio"]:checked { background: radial-gradient(circle, #262e46 4px, #fff 5px); }
.opt input:disabled { border-color: #ccc; }
.opt .gray { color: #9b9ea6; }
.unit { width: 90px; margin-left: auto; }
.unit select { height: 22px; padding: 0 4px; }
.unit::after { top: 9px; }
.folds { padding-top: 4px; }
.folds .sect { height: 55px; margin: 0; }

/* side strip */
.strip { flex: none; width: 32px; display: flex; flex-direction: column; gap: 4px; overflow: hidden; }
.strip svg { fill: none; stroke: #2b3350; }
.bars2 { width: 22px; height: 4px; margin: 11px 0 9px 11px; border: solid #c8ccd6; border-width: 1px 0; }
.strip button { flex: none; width: 40px; height: 32px; margin-left: 5px; padding-left: 8px; border-radius: 3px; }
.strip .on { background: #d8dce5; }
.strip .off svg { stroke: #9ca3b5; }
.rule { margin: auto 0 18px; height: 1px; background: #e0e2e9; }
.more3 { margin: 0 0 16px 13px; }

/* status bar */
.status { flex: none; height: 22px; display: flex; align-items: center; padding: 2px 5px 0 12px; overflow: hidden; }
.status svg { fill: none; stroke: #2b3350; }
.status .vline { height: 14px; margin-left: 15px; }
.sright { margin-left: auto; display: flex; align-items: center; }
.sright > svg + svg { margin-left: 7px; }
.sright .caret { margin-left: 4px; }
.sright .vline { margin: 0 10px 0 14px; }
.sright .near { margin-left: 8px; }
.view { width: 23px; height: 23px; display: flex; align-items: center; justify-content: center; margin-right: 3px; }
.view.on { background: #d8dce5; }
.zoom { display: flex; align-items: center; margin-right: 13px; }
.status input { appearance: none; width: 150px; height: 14px; margin: 0 6px; background: linear-gradient(#4d5b7c, #4d5b7c) center / 138px 1px no-repeat; }
.status input::-webkit-slider-thumb { appearance: none; width: 12px; height: 12px; border: 1px solid #555; border-radius: 6px; background: #eee; }
.status input + svg + svg { margin-left: 13px; }

/* overlays */
.two-a { left: 1300px; top: 362px; }
.cursor { position: absolute; left: 1388px; top: 436px; }
.ime { position: absolute; right: 127px; bottom: 51px; width: 62px; height: 27px; display: flex; align-items: center; justify-content: center; gap: 3px; border: 1px solid #888; border-radius: 5px; background: #fff; box-shadow: 1px 1px 3px rgba(0, 0, 0, .5); color: #333; font-size: 13px; }
.mark { position: absolute; right: 11px; bottom: 7px; display: flex; }
.mark strong { display: block; font: bold 21px/24px "Noto Sans CJK SC", sans-serif; color: #5f9bd8; }
.mark a { display: block; font: bold 17px/18px "Liberation Sans", sans-serif; color: #76c48f; }
.mark div { margin-left: -2px; width: 106px; }
```
